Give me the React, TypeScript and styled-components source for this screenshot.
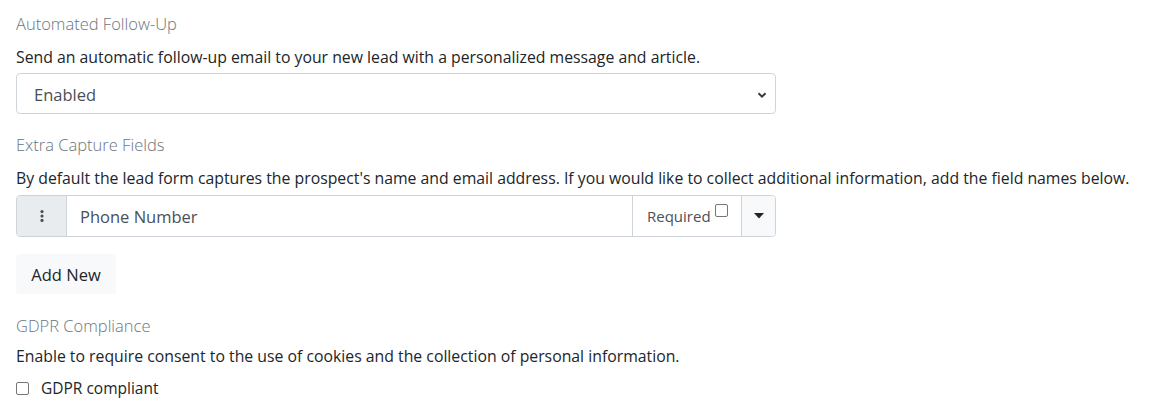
import React from "react";
import styled, { createGlobalStyle } from "styled-components";

const GlobalStyle = createGlobalStyle`
  body {
    margin: 0;
    background: #fff;
    font-family: "Open Sans", "Noto Sans", sans-serif;
    color: #212529;
  }
`;

const Page = styled.div`
  padding: 12px 16px 0;
  width: 1139px;
  box-sizing: border-box;
`;

const Title = styled.div<{ $top?: number }>`
  font-size: 16.5px;
  font-weight: 300;
  line-height: 24px;
  color: #6c757d;
  margin-top: ${(p) => p.$top ?? 0}px;
`;

const Help = styled.div<{ $gap?: number }>`
  font-size: 15.8px;
  line-height: 24px;
  color: #212529;
  white-space: nowrap;
  margin-top: ${(p) => p.$gap ?? 9}px;
`;

const SelectBox = styled.div`
  margin-top: 4px;
  width: 760px;
  height: 41px;
  box-sizing: border-box;
  border: 1px solid #ced4da;
  border-radius: 4px;
  display: flex;
  align-items: center;
  justify-content: space-between;
  padding: 2px 8px 0 17px;
  font-size: 16.5px;
  color: #495057;
`;

const InputGroup = styled.div`
  margin-top: 5px;
  width: 760px;
  height: 42px;
  box-sizing: border-box;
  border: 1px solid #ced4da;
  border-radius: 4px;
  display: flex;
  overflow: hidden;
`;

const Grip = styled.div`
  width: 49px;
  background: #e9ecef;
  border-right: 1px solid #ced4da;
  display: flex;
  align-items: center;
  justify-content: center;
`;

const FieldText = styled.div`
  flex: 1;
  display: flex;
  align-items: center;
  padding-left: 13px;
  font-size: 16.5px;
  color: #495057;
`;

const RequiredCell = styled.div`
  width: 110px;
  box-sizing: border-box;
  border-left: 1px solid #ced4da;
  border-right: 1px solid #ced4da;
  display: flex;
  align-items: center;
  padding-left: 14px;
  font-size: 15px;
  color: #495057;
`;

const SmallBox = styled.span<{ $raised?: boolean }>`
  display: inline-block;
  width: 13px;
  height: 13px;
  box-sizing: border-box;
  border: 1px solid #767676;
  border-radius: 2px;
  background: #fff;
  margin-left: ${(p) => (p.$raised ? 4 : 0)}px;
  position: relative;
  top: ${(p) => (p.$raised ? -6 : 0)}px;
`;

const CaretButton = styled.div`
  width: 33px;
  background: #f8f9fa;
  display: flex;
  align-items: center;
  justify-content: center;
`;

const AddButton = styled.div`
  margin-top: 17px;
  width: 100px;
  height: 40px;
  box-sizing: border-box;
  background: #f8f9fa;
  border-radius: 4px;
  display: flex;
  align-items: center;
  justify-content: center;
  font-size: 16.5px;
  color: #212529;
`;

const CheckRow = styled.div`
  margin-top: 8px;
  display: flex;
  align-items: center;
  gap: 12px;
  font-size: 15.5px;
  line-height: 24px;
  color: #212529;
`;

const Chevron = () => (
  <svg width="10" height="8" viewBox="0 0 10 8">
    <path d="M1.5 2.2 L5 5.6 L8.5 2.2" fill="none" stroke="#343a40" strokeWidth="2" />
  </svg>
);

const Dots = () => (
  <svg width="4" height="12" viewBox="0 0 4 12">
    <circle cx="2" cy="1.6" r="1.6" fill="#495057" />
    <circle cx="2" cy="6" r="1.6" fill="#495057" />
    <circle cx="2" cy="10.4" r="1.6" fill="#495057" />
  </svg>
);

const Caret = () => (
  <svg width="10" height="6" viewBox="0 0 10 6">
    <path d="M0 0 L10 0 L5 5.5 Z" fill="#212529" />
  </svg>
);

const App = () => (
  <Page>
    <GlobalStyle />
    <Title>Automated Follow-Up</Title>
    <Help>Send an automatic follow-up email to your new lead with a personalized message and article.</Help>
    <SelectBox>
      <span>Enabled</span>
      <Chevron />
    </SelectBox>

    <Title $top={19}>Extra Capture Fields</Title>
    <Help>
      By default the lead form captures the prospect's name and email address. If you would like to collect additional information, add the field names below.
    </Help>
    <InputGroup>
      <Grip>
        <Dots />
      </Grip>
      <FieldText>Phone Number</FieldText>
      <RequiredCell>
        Required
        <SmallBox $raised />
      </RequiredCell>
      <CaretButton>
        <Caret />
      </CaretButton>
    </InputGroup>
    <AddButton>Add New</AddButton>

    <Title $top={20}>GDPR Compliance</Title>
    <Help $gap={6}>Enable to require consent to the use of cookies and the collection of personal information.</Help>
    <CheckRow>
      <SmallBox />
      GDPR compliant
    </CheckRow>
  </Page>
);

export default App;
